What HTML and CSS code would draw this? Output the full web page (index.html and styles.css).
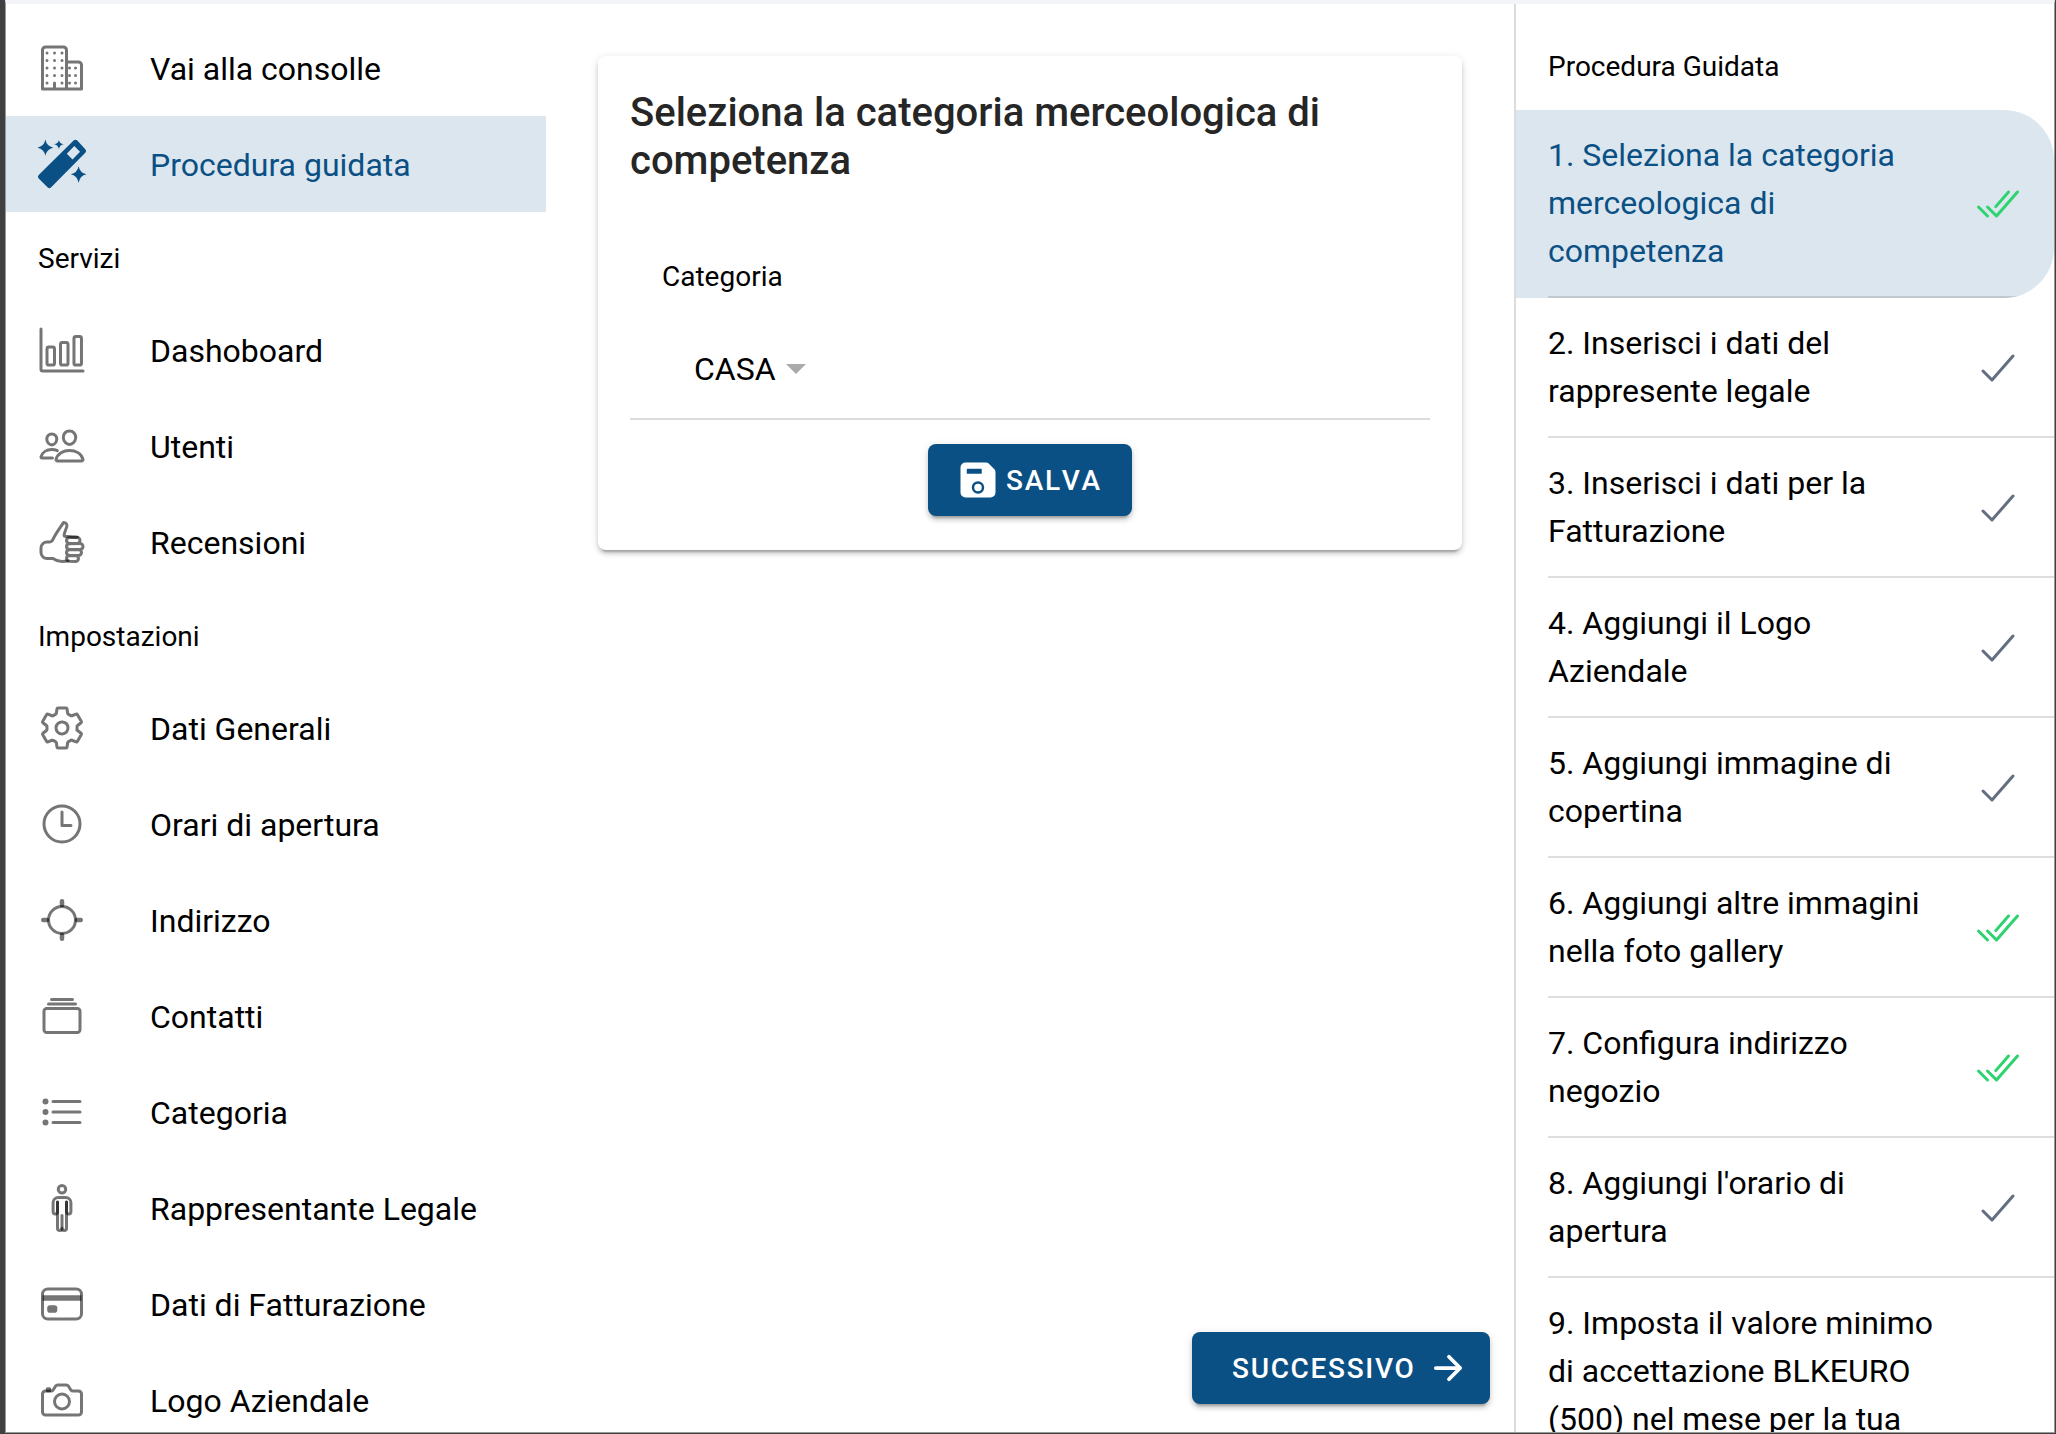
FILE: index.html
```html
<!DOCTYPE html>
<html lang="it">
<head>
<meta charset="utf-8">
<title>Procedura guidata</title>
<link rel="stylesheet" href="styles.css">
</head>
<body>
<svg class="sprite" aria-hidden="true">
  <symbol id="check" viewBox="0 0 512 512"><path d="M416 128L192 384l-96-96"/></symbol>
  <symbol id="check-done" viewBox="0 0 512 512"><path d="M464 128L240 384l-96-96M144 384l-96-96M368 128L232 284"/></symbol>
</svg>
<div class="window">
  <nav class="menu">
    <a class="menu-item">
      <svg class="icon" viewBox="0 0 512 512"><path d="M176 416v64M80 32h192a32 32 0 0132 32v412a4 4 0 01-4 4H48V64a32 32 0 0132-32zM320 192h112a32 32 0 0132 32v256H304V208a16 16 0 0116-16z"/><path class="dots" d="M96 96h0M176 96h0M256 96h0M96 176h0M176 176h0M256 176h0M96 256h0M176 256h0M256 256h0M96 336h0M176 336h0M256 336h0M96 416h0M256 416h0M336 256h0M400 256h0M336 336h0M400 336h0M336 416h0M400 416h0"/></svg>
      <span>Vai alla consolle</span>
    </a>
    <a class="menu-item active">
      <svg class="icon wand" viewBox="0 0 48 48"><path fill-rule="evenodd" d="M35.6.6a2.6 2.6 0 013.7 0l8 8.6a2.6 2.6 0 010 3.6L13.200 47.200a2.600 2.600 0 01-3.700 0L.7 38.600a2.600 2.600 0 010-3.600zM36.300 6L28.800 13.700l5.700 5.700 7.500-7.700z"/><path d="M7.400-.4Q8.700 6.400 15.300 7.700 8.700 9 7.400 15.800 6.100 9-.5 7.700 6.100 6.400 7.400-.4zM20.900-.1Q21.700 3.500 25.700 4.300 21.700 5.100 20.900 8.900 20.100 5.100 16.100 4.300 20.100 3.500 20.900-.1zM40.600 26.300Q41.900 33 48.500 34.300 41.900 35.600 40.600 42.700 39.300 35.600 32.700 34.300 39.300 33 40.600 26.300z"/></svg>
      <span>Procedura guidata</span>
    </a>
    <div class="list-header">Servizi</div>
    <a class="menu-item">
      <svg class="icon" viewBox="0 0 512 512"><path d="M32 32v432a16 16 0 0016 16h432"/><rect x="96" y="224" width="80" height="192" rx="20"/><rect x="240" y="176" width="80" height="240" rx="20"/><rect x="383.640" y="112" width="80" height="304" rx="20"/></svg>
      <span>Dashoboard</span>
    </a>
    <a class="menu-item">
      <svg class="icon" viewBox="0 0 512 512"><path d="M402 168c-2.930 40.670-33.100 72-66 72s-63.120-31.320-66-72c-3-42.310 26.370-72 66-72s69 30.460 66 72z"/><path d="M336 304c-65.170 0-127.840 32.370-143.540 95.410-2.080 8.340 3.150 16.590 11.720 16.590h263.650c8.570 0 13.770-8.250 11.720-16.590C463.850 335.360 401.180 304 336 304z"/><path d="M200 185.940c-2.340 32.480-26.720 58.060-53 58.060s-50.700-25.570-53-58.060C91.610 152.150 115.340 128 147 128s55.390 24.770 53 57.940zM206 306c-18.050-8.270-37.930-11.450-59-11.450-52 0-102.100 25.850-114.650 76.200-1.650 6.660 2.530 13.250 9.370 13.250H154"/></svg>
      <span>Utenti</span>
    </a>
    <a class="menu-item">
      <svg class="icon" viewBox="0 0 512 512"><path d="M320 458.160S304 464 256 464s-74-16-96-32H96a64 64 0 01-64-64v-48a64 64 0 0164-64h30a32.340 32.340 0 0027.370-15.400S162 221.810 188 176.780 264 64 272 48c29 0 43 22 34 47.710-10.280 29.390-23.710 54.380-27.460 87.090-.54 4.780 3.140 12 7.950 12L416 205"/><path d="M416 271l-80-2c-20-1.840-32-12.400-32-30 0-17.600 14-28.840 32-30l80-4c17.600 0 32 16.400 32 34v.17A32 32 0 01416 271zM448 336l-112-2c-18-.84-32-12.410-32-30 0-17.610 14-28.860 32-30l112-2a32.100 32.100 0 0132 32 32.100 32.100 0 01-32 32zM400 464l-64-3c-21-1.840-32-11.400-32-29 0-17.600 14.400-30 32-30l64-2a32.090 32.090 0 0132 32 32.090 32.090 0 01-32 32zM432 400l-96-2c-19-.84-32-12.400-32-30 0-17.600 13-28.840 32-30l96-2a32.090 32.090 0 0132 32 32.090 32.090 0 01-32 32z"/></svg>
      <span>Recensioni</span>
    </a>
    <div class="list-header">Impostazioni</div>
    <a class="menu-item">
      <svg class="icon" viewBox="0 0 512 512"><path d="M262.29 192.31a64 64 0 1057.4 57.4 64.13 64.13 0 00-57.4-57.4zM416.39 256a154.34 154.34 0 01-1.53 20.79l45.21 35.46a10.81 10.81 0 012.45 13.75l-42.77 74a10.81 10.81 0 01-13.14 4.59l-44.9-18.08a16.11 16.11 0 00-15.17 1.75A164.48 164.48 0 01325 400.8a15.94 15.94 0 00-8.82 12.14l-6.73 47.89a11.08 11.08 0 01-10.68 9.17h-85.54a11.11 11.11 0 01-10.69-8.87l-6.72-47.82a16.07 16.07 0 00-9-12.22 155.3 155.3 0 01-21.46-12.57 16 16 0 00-15.11-1.71l-44.89 18.07a10.81 10.81 0 01-13.14-4.58l-42.77-74a10.8 10.8 0 012.45-13.75l38.21-30a16.05 16.05 0 006-14.08c-.36-4.17-.58-8.33-.58-12.5s.21-8.27.58-12.35a16 16 0 00-6.07-13.94l-38.19-30A10.81 10.81 0 0149.48 186l42.77-74a10.81 10.81 0 0113.14-4.59l44.9 18.08a16.11 16.11 0 0015.17-1.75A164.48 164.48 0 01187 111.2a15.94 15.94 0 008.82-12.14l6.73-47.89A11.08 11.08 0 01213.23 42h85.54a11.11 11.11 0 0110.69 8.87l6.72 47.82a16.07 16.07 0 009 12.22 155.3 155.3 0 0121.46 12.57 16 16 0 0015.11 1.71l44.89-18.07a10.81 10.81 0 0113.14 4.58l42.77 74a10.8 10.8 0 01-2.45 13.75l-38.21 30a16.05 16.05 0 00-6.05 14.08c.33 4.14.55 8.3.55 12.47z"/></svg>
      <span>Dati Generali</span>
    </a>
    <a class="menu-item">
      <svg class="icon" viewBox="0 0 512 512"><circle cx="256" cy="256" r="192"/><path d="M256 128v144h96"/></svg>
      <span>Orari di apertura</span>
    </a>
    <a class="menu-item">
      <svg class="icon" viewBox="0 0 512 512"><path class="ticks" d="M256 96V56M256 456v-40M416 256h40M56 256h40"/><circle cx="256" cy="256" r="144"/></svg>
      <span>Indirizzo</span>
    </a>
    <a class="menu-item">
      <svg class="icon" viewBox="0 0 512 512"><rect x="64" y="176" width="384" height="256" rx="28.870"/><path d="M144 80h224M112 128h288"/></svg>
      <span>Contatti</span>
    </a>
    <a class="menu-item">
      <svg class="icon" viewBox="0 0 512 512"><path d="M160 144h288M160 256h288M160 368h288"/><circle cx="80" cy="144" r="16"/><circle cx="80" cy="256" r="16"/><circle cx="80" cy="368" r="16"/></svg>
      <span>Categoria</span>
    </a>
    <a class="menu-item">
      <svg class="icon" viewBox="0 0 512 512"><circle cx="256" cy="56" r="40"/><path d="M208 192v105a23.500 23.500 0 01-47 0v-97a56 56 0 0156-56h78a56 56 0 0156 56v97a23.500 23.500 0 01-47 0V192"/><path d="M208 192v280a24 24 0 0048 0V336"/><path d="M304 192v280a24 24 0 01-48 0"/></svg>
      <span>Rappresentante Legale</span>
    </a>
    <a class="menu-item">
      <svg class="icon" viewBox="0 0 512 512"><rect x="48" y="96" width="416" height="320" rx="56"/><path class="band" d="M48 192h416M128 300h48v20h-48z"/></svg>
      <span>Dati di Fatturazione</span>
    </a>
    <a class="menu-item">
      <svg class="icon" viewBox="0 0 512 512"><path d="M350.540 148.680l-26.620-42.060C318.310 100.080 310.620 96 302 96h-92c-8.620 0-16.310 4.080-21.920 10.620l-26.620 42.060C155.850 155.230 148.620 160 140 160H80a32 32 0 00-32 32v192a32 32 0 0032 32h352a32 32 0 0032-32V192a32 32 0 00-32-32h-59c-8.650 0-16.850-4.770-22.460-11.320z"/><circle cx="256" cy="272" r="80"/><path d="M124 158v-22h-24v22"/></svg>
      <span>Logo Aziendale</span>
    </a>
  </nav>

  <main class="content">
    <section class="card">
      <h1>Seleziona la categoria merceologica di competenza</h1>
      <div class="field">
        <div class="field-label">Categoria</div>
        <div class="select">CASA<span class="caret"></span></div>
      </div>
      <button class="button save">
        <svg class="button-icon solid" viewBox="0 0 512 512"><path d="M465.940 119.760l-73.700-73.700A47.680 47.680 0 00358.300 32H96a64 64 0 00-64 64v320a64 64 0 0064 64h320a64 64 0 0064-64V153.700a47.680 47.680 0 00-14.060-33.940zM120 112h176a8 8 0 018 8v48a8 8 0 01-8 8H120a8 8 0 01-8-8v-48a8 8 0 018-8zm139.750 319.910a80 80 0 1176.160-76.160 80.060 80.060 0 01-76.160 76.160z"/><circle cx="256" cy="352" r="48"/></svg>
        Salva
      </button>
    </section>
    <button class="button next">
      Successivo
      <svg class="button-icon arrow" viewBox="0 0 512 512"><path d="M268 112l144 144-144 144M392 256H100"/></svg>
    </button>
  </main>

  <aside class="steps">
    <div class="list-header">Procedura Guidata</div>
    <div class="step active"><div class="step-inner"><span>1. Seleziona la categoria merceologica di competenza</span><svg class="mark done"><use href="#check-done"/></svg></div></div>
    <div class="step"><div class="step-inner"><span>2. Inserisci i dati del rappresente legale</span><svg class="mark"><use href="#check"/></svg></div></div>
    <div class="step"><div class="step-inner"><span>3. Inserisci i dati per la Fatturazione</span><svg class="mark"><use href="#check"/></svg></div></div>
    <div class="step"><div class="step-inner"><span>4. Aggiungi il Logo Aziendale</span><svg class="mark"><use href="#check"/></svg></div></div>
    <div class="step"><div class="step-inner"><span>5. Aggiungi immagine di copertina</span><svg class="mark"><use href="#check"/></svg></div></div>
    <div class="step"><div class="step-inner"><span>6. Aggiungi altre immagini nella foto gallery</span><svg class="mark done"><use href="#check-done"/></svg></div></div>
    <div class="step"><div class="step-inner"><span>7. Configura indirizzo negozio</span><svg class="mark done"><use href="#check-done"/></svg></div></div>
    <div class="step"><div class="step-inner"><span>8. Aggiungi l'orario di apertura</span><svg class="mark"><use href="#check"/></svg></div></div>
    <div class="step"><div class="step-inner"><span>9. Imposta il valore minimo di accettazione BLKEURO (500) nel mese per la tua</span><svg class="mark"></svg></div></div>
  </aside>
</div>
</body>
</html>
```
FILE: styles.css
```css
* { box-sizing: border-box; }

body {
  margin: 0;
  height: 1434px;
  overflow: hidden;
  padding: 0 1px 1px 5px;
  background: #404040;
  font-family: Roboto, "Liberation Sans", sans-serif;
  font-size: 32px;
  color: #000;
}

.sprite { display: none; }

.window {
  display: grid;
  grid-template-columns: 540px 1fr 540px;
  height: 1433px;
  overflow: hidden;
  background: #fff;
  border: solid #999;
  border-width: 0 1px 1px;
  border-top: 4px solid #f2f4f8;
}

.menu { padding-top: 16px; overflow: hidden; }

.menu-item {
  display: flex;
  align-items: center;
  gap: 64px;
  height: 96px;
  padding: 2px 32px 0;
  white-space: nowrap;
}

.menu-item .icon { margin-top: -2px; }

.active { background: #dce6ee; color: #0b5084; }

.list-header {
  display: flex;
  align-items: center;
  height: 90px;
  padding: 2px 32px 0;
  font-size: 28px;
}

.icon {
  flex: none;
  width: 48px;
  height: 48px;
  overflow: visible;
  fill: none;
  stroke: rgba(0, 0, 0, .54);
  stroke-width: 32;
  stroke-linecap: round;
  stroke-linejoin: round;
}

.ticks { stroke-width: 48; }
.band { stroke-width: 60; stroke-linecap: butt; }
.wand { fill: #0b5084; stroke: none; }

.content {
  display: flex;
  flex-direction: column;
  justify-content: space-between;
  padding: 52px 24px 28px 52px;
}

.card {
  display: flex;
  flex-direction: column;
  width: 864px;
  height: 494px;
  padding: 33px 32px 32px;
  border-radius: 8px;
  box-shadow: 0 6px 2px -4px rgba(0, 0, 0, .2), 0 4px 4px rgba(0, 0, 0, .14), 0 2px 10px rgba(0, 0, 0, .12);
}

h1 {
  margin: 0;
  font-size: 40px;
  font-weight: 500;
  line-height: 48px;
  color: #262626;
}

.field {
  height: 235px;
  margin-bottom: 24px;
  padding: 46px 32px 0;
  border-bottom: 2px solid #dcdcdc;
}

.field-label {
  display: flex;
  align-items: center;
  height: 90px;
  font-size: 28px;
}

.select {
  display: flex;
  align-items: center;
  gap: 10px;
  height: 96px;
  padding: 0 32px;
}

.caret {
  border: 10px solid transparent;
  border-top-color: #aaa;
  border-bottom: 0;
}

.button {
  display: flex;
  align-items: center;
  height: 72px;
  border: 0;
  border-radius: 8px;
  background: #0b5084;
  color: #fff;
  font: 500 28px Roboto, "Liberation Sans", sans-serif;
  letter-spacing: 1.68px;
  text-transform: uppercase;
  box-shadow: 0 6px 2px -4px rgba(0, 0, 0, .2), 0 4px 4px rgba(0, 0, 0, .14), 0 2px 10px rgba(0, 0, 0, .12);
}

.save { align-self: center; width: 204px; padding: 0 0 0 30px; gap: 8px; font-kerning: none; }
.next { align-self: flex-end; width: 298px; padding: 0 22px 0 40px; justify-content: space-between; }

.button-icon { width: 40px; height: 40px; fill: #fff; }
.arrow { fill: none; stroke: #fff; stroke-width: 48; stroke-linecap: round; stroke-linejoin: round; }

.steps {
  padding-top: 16px;
  border-left: 2px solid #dcdcdc;
  overflow: hidden;
}

.step { padding-left: 32px; }
.step.active { border-radius: 0 50px 50px 0; overflow: hidden; }

.step-inner {
  display: grid;
  grid-template-columns: 394px 48px;
  gap: 32px;
  align-items: center;
  padding: 21px 0;
  line-height: 48px;
  border-bottom: 2px solid rgba(0, 0, 0, .13);
}

.mark {
  width: 48px;
  height: 48px;
  margin-top: 2px;
  fill: none;
  stroke: #636f80;
  stroke-width: 32;
  stroke-linecap: round;
  stroke-linejoin: round;
}

.mark.done { stroke: #2dd36f; }
```
